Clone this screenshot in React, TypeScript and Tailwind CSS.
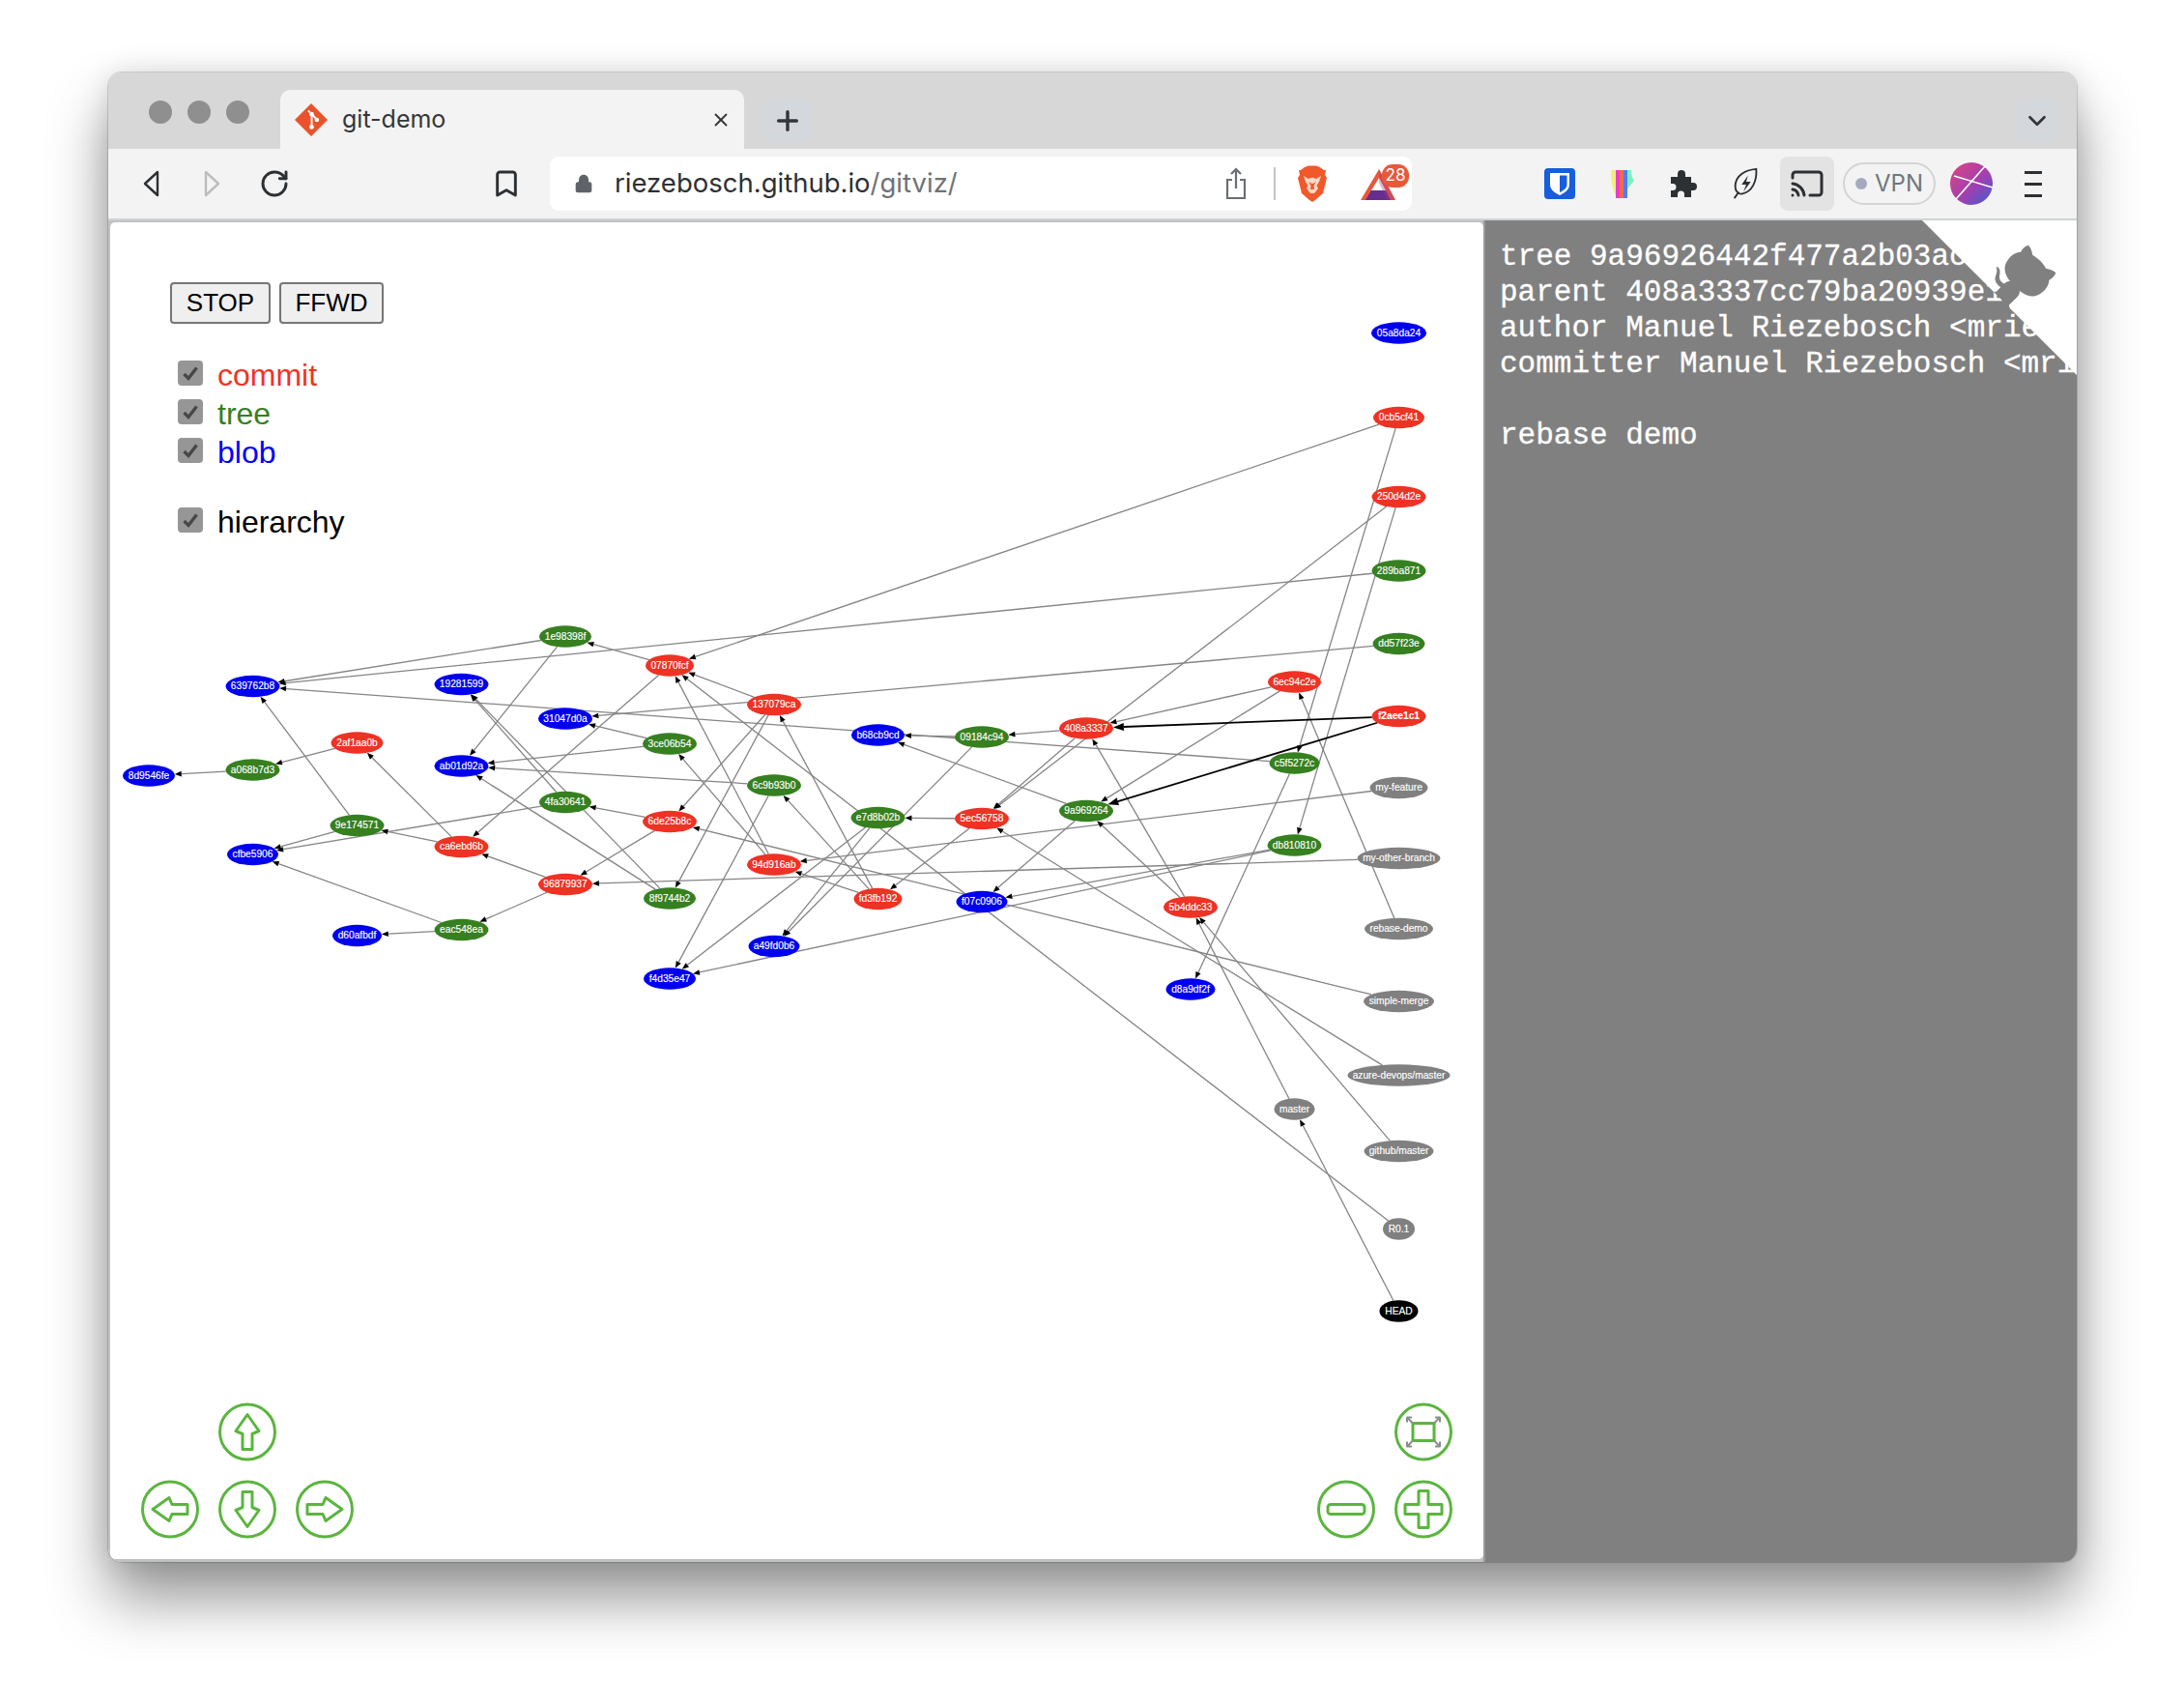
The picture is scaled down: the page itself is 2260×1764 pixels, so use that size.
import { Bookmark, Cast, Lock, RotateCw, X, Plus, ChevronDown } from "lucide-react";

type Kind = "commit" | "tree" | "blob" | "ref" | "head";
type GraphNode = { id: string; x: number; y: number; kind: Kind; rx: number };

const FILL: Record<Kind, string> = {
  commit: "#ee3224",
  tree: "#368020",
  blob: "#0000f0",
  ref: "#808080",
  head: "#000000",
};

// page coordinates, the svg viewBox below maps them onto the canvas
const nodes: GraphNode[] = [
  { id: "639762b8", x: 261.5, y: 710, kind: "blob", rx: 28 },
  { id: "19281599", x: 477.5, y: 708, kind: "blob", rx: 28 },
  { id: "1e98398f", x: 585, y: 658.5, kind: "tree", rx: 27 },
  { id: "07870fcf", x: 693, y: 688.5, kind: "commit", rx: 25 },
  { id: "31047d0a", x: 585, y: 743.5, kind: "blob", rx: 28 },
  { id: "2af1aa0b", x: 369.5, y: 768.5, kind: "commit", rx: 27 },
  { id: "3ce06b54", x: 693, y: 769.5, kind: "tree", rx: 28 },
  { id: "ab01d92a", x: 477.5, y: 792.5, kind: "blob", rx: 28 },
  { id: "a068b7d3", x: 261.5, y: 796.5, kind: "tree", rx: 28 },
  { id: "8d9546fe", x: 154, y: 802.5, kind: "blob", rx: 27 },
  { id: "4fa30641", x: 585, y: 830, kind: "tree", rx: 27 },
  { id: "9e174571", x: 369.5, y: 854, kind: "tree", rx: 28 },
  { id: "6de25b8c", x: 693, y: 850, kind: "commit", rx: 28 },
  { id: "cfbe5906", x: 261.5, y: 884, kind: "blob", rx: 26.5 },
  { id: "ca6ebd6b", x: 477.5, y: 876, kind: "commit", rx: 28 },
  { id: "96879937", x: 585, y: 915, kind: "commit", rx: 28 },
  { id: "8f9744b2", x: 693, y: 929.5, kind: "tree", rx: 27 },
  { id: "eac548ea", x: 477.5, y: 962, kind: "tree", rx: 28 },
  { id: "d60afbdf", x: 369.5, y: 968, kind: "blob", rx: 25.5 },
  { id: "f4d35e47", x: 693, y: 1012.5, kind: "blob", rx: 27 },
  { id: "137079ca", x: 801, y: 729, kind: "commit", rx: 28 },
  { id: "6c9b93b0", x: 801, y: 812.5, kind: "tree", rx: 28 },
  { id: "94d916ab", x: 801, y: 894.5, kind: "commit", rx: 28 },
  { id: "a49fd0b6", x: 801, y: 979, kind: "blob", rx: 26.5 },
  { id: "b68cb9cd", x: 908.5, y: 760.5, kind: "blob", rx: 27.5 },
  { id: "e7d8b02b", x: 908.5, y: 846, kind: "tree", rx: 28 },
  { id: "fd3fb192", x: 908.5, y: 930, kind: "commit", rx: 25 },
  { id: "09184c94", x: 1016, y: 762.5, kind: "tree", rx: 28 },
  { id: "5ec56758", x: 1016, y: 847, kind: "commit", rx: 28 },
  { id: "f07c0906", x: 1016, y: 933, kind: "blob", rx: 26.5 },
  { id: "408a3337", x: 1124, y: 753.5, kind: "commit", rx: 28 },
  { id: "9a969264", x: 1124, y: 839, kind: "tree", rx: 28 },
  { id: "5b4ddc33", x: 1232, y: 938.5, kind: "commit", rx: 28 },
  { id: "d8a9df2f", x: 1232, y: 1023.5, kind: "blob", rx: 25.5 },
  { id: "6ec94c2e", x: 1339.5, y: 705.5, kind: "commit", rx: 27.5 },
  { id: "c5f5272c", x: 1339.5, y: 789.5, kind: "tree", rx: 26 },
  { id: "db810810", x: 1339.5, y: 874.5, kind: "tree", rx: 28 },
  { id: "master", x: 1339.5, y: 1147.5, kind: "ref", rx: 21 },
  { id: "05a8da24", x: 1447.5, y: 344.5, kind: "blob", rx: 28.5 },
  { id: "0cb5cf41", x: 1447.5, y: 432, kind: "commit", rx: 26.5 },
  { id: "250d4d2e", x: 1447.5, y: 514, kind: "commit", rx: 28 },
  { id: "289ba871", x: 1447.5, y: 590.5, kind: "tree", rx: 28 },
  { id: "dd57f23e", x: 1447.5, y: 666, kind: "tree", rx: 27 },
  { id: "f2aee1c1", x: 1447.5, y: 741, kind: "commit", rx: 28 },
  { id: "my-feature", x: 1447.5, y: 815, kind: "ref", rx: 30 },
  { id: "my-other-branch", x: 1447.5, y: 888, kind: "ref", rx: 43 },
  { id: "rebase-demo", x: 1447.5, y: 961, kind: "ref", rx: 35.5 },
  { id: "simple-merge", x: 1447.5, y: 1036, kind: "ref", rx: 36.5 },
  { id: "azure-devops/master", x: 1447.5, y: 1112.5, kind: "ref", rx: 53 },
  { id: "github/master", x: 1447.5, y: 1191, kind: "ref", rx: 36 },
  { id: "R0.1", x: 1447.5, y: 1271.5, kind: "ref", rx: 16.5 },
  { id: "HEAD", x: 1447.5, y: 1356.5, kind: "head", rx: 20 },
];

const edges: [string, string][] = [
  ["0cb5cf41", "07870fcf"],
  ["0cb5cf41", "c5f5272c"],
  ["250d4d2e", "5ec56758"],
  ["250d4d2e", "db810810"],
  ["289ba871", "639762b8"],
  ["dd57f23e", "31047d0a"],
  ["6ec94c2e", "408a3337"],
  ["6ec94c2e", "9a969264"],
  ["c5f5272c", "639762b8"],
  ["c5f5272c", "d8a9df2f"],
  ["09184c94", "b68cb9cd"],
  ["09184c94", "a49fd0b6"],
  ["408a3337", "09184c94"],
  ["408a3337", "5ec56758"],
  ["5ec56758", "e7d8b02b"],
  ["5ec56758", "fd3fb192"],
  ["R0.1", "07870fcf"],
  ["e7d8b02b", "f4d35e47"],
  ["e7d8b02b", "a49fd0b6"],
  ["6c9b93b0", "ab01d92a"],
  ["6c9b93b0", "f4d35e47"],
  ["fd3fb192", "6c9b93b0"],
  ["fd3fb192", "137079ca"],
  ["fd3fb192", "94d916ab"],
  ["94d916ab", "3ce06b54"],
  ["94d916ab", "07870fcf"],
  ["137079ca", "07870fcf"],
  ["137079ca", "6de25b8c"],
  ["137079ca", "8f9744b2"],
  ["07870fcf", "1e98398f"],
  ["07870fcf", "ca6ebd6b"],
  ["1e98398f", "639762b8"],
  ["1e98398f", "ab01d92a"],
  ["3ce06b54", "31047d0a"],
  ["3ce06b54", "ab01d92a"],
  ["6de25b8c", "4fa30641"],
  ["6de25b8c", "96879937"],
  ["4fa30641", "19281599"],
  ["4fa30641", "cfbe5906"],
  ["8f9744b2", "19281599"],
  ["8f9744b2", "ab01d92a"],
  ["96879937", "ca6ebd6b"],
  ["96879937", "eac548ea"],
  ["ca6ebd6b", "9e174571"],
  ["ca6ebd6b", "2af1aa0b"],
  ["2af1aa0b", "a068b7d3"],
  ["a068b7d3", "8d9546fe"],
  ["9e174571", "639762b8"],
  ["9e174571", "cfbe5906"],
  ["eac548ea", "cfbe5906"],
  ["eac548ea", "d60afbdf"],
  ["my-feature", "94d916ab"],
  ["my-other-branch", "96879937"],
  ["rebase-demo", "6ec94c2e"],
  ["simple-merge", "6de25b8c"],
  ["azure-devops/master", "5ec56758"],
  ["github/master", "5b4ddc33"],
  ["master", "5b4ddc33"],
  ["HEAD", "master"],
  ["5b4ddc33", "408a3337"],
  ["5b4ddc33", "9a969264"],
  ["9a969264", "b68cb9cd"],
  ["9a969264", "f07c0906"],
  ["db810810", "f07c0906"],
  ["db810810", "f4d35e47"],
];

const boldEdges: [string, string][] = [
  ["f2aee1c1", "408a3337"],
  ["f2aee1c1", "9a969264"],
];

const RY = 11.2;

function Edge({ from, to, bold }: { from: string; to: string; bold?: boolean }) {
  const a = nodes.find((n) => n.id === from)!;
  const b = nodes.find((n) => n.id === to)!;
  const dx = b.x - a.x;
  const dy = b.y - a.y;
  const len = Math.hypot(dx, dy);
  const ux = dx / len;
  const uy = dy / len;
  // clip both ends on the ellipses
  const ta = 1 / Math.hypot(ux / a.rx, uy / RY);
  const tb = 1 / Math.hypot(ux / b.rx, uy / RY);
  const sx = a.x + ux * ta;
  const sy = a.y + uy * ta;
  const ex = b.x - ux * tb;
  const ey = b.y - uy * tb;
  const headLen = bold ? 11 : 7;
  const headW = bold ? 4 : 2.8;
  const bx = ex - ux * headLen;
  const by = ey - uy * headLen;
  const points = `${ex},${ey} ${bx - uy * headW},${by + ux * headW} ${bx + uy * headW},${by - ux * headW}`;
  return (
    <g>
      <line
        x1={sx}
        y1={sy}
        x2={bx}
        y2={by}
        stroke={bold ? "#000000" : "#858585"}
        strokeWidth={bold ? 1.8 : 1.3}
      />
      <polygon points={points} fill="#000000" />
    </g>
  );
}

function NavCircle({ cx, cy, children }: { cx: number; cy: number; children: React.ReactNode }) {
  return (
    <g transform={`translate(${cx} ${cy})`} fill="none" stroke="#5bb53f" strokeWidth={3} strokeLinejoin="round">
      <circle r={28.5} />
      {children}
    </g>
  );
}

const ARROW = "0,-18 12,-1 5,2 5,18 -5,18 -5,2 -12,-1";

function Graph() {
  return (
    <svg
      viewBox="114 230 1421 1384"
      className="absolute top-0 left-0 h-[1384px] w-[1421px] font-['Liberation_Sans',Arial,sans-serif]"
    >
      {edges.map(([from, to]) => (
        <Edge key={from + to} from={from} to={to} />
      ))}
      {boldEdges.map(([from, to]) => (
        <Edge key={from + to} from={from} to={to} bold />
      ))}
      {nodes.map((n) => (
        <g key={n.id}>
          <ellipse cx={n.x} cy={n.y} rx={n.rx} ry={RY} fill={FILL[n.kind]} />
          <text
            x={n.x}
            y={n.y + 3.4}
            textAnchor="middle"
            fill="#ffffff"
            stroke="#ffffff"
            strokeWidth={0.15}
            fontSize={10.2}
            fontWeight={n.id === "f2aee1c1" ? 700 : 400}
          >
            {n.id}
          </text>
        </g>
      ))}

      {/* pan and zoom controls */}
      <NavCircle cx={256} cy={1481.5}>
        <polygon points={ARROW} />
      </NavCircle>
      <NavCircle cx={176} cy={1561.5}>
        <polygon points={ARROW} transform="rotate(-90)" />
      </NavCircle>
      <NavCircle cx={256} cy={1561.5}>
        <polygon points={ARROW} transform="rotate(180)" />
      </NavCircle>
      <NavCircle cx={336} cy={1561.5}>
        <polygon points={ARROW} transform="rotate(90)" />
      </NavCircle>
      <NavCircle cx={1473} cy={1481.5}>
        <rect x={-11} y={-9} width={22} height={18} />
        <g stroke="#8c8c8c" strokeWidth={2}>
          <path d="M-11 -9 L-17 -15 M-17 -10 V-15 H-12" />
          <path d="M11 -9 L17 -15 M17 -10 V-15 H12" />
          <path d="M-11 9 L-17 15 M-17 10 V15 H-12" />
          <path d="M11 9 L17 15 M17 10 V15 H12" />
        </g>
      </NavCircle>
      <NavCircle cx={1393} cy={1561.5}>
        <rect x={-19} y={-5} width={38} height={10} rx={3} />
      </NavCircle>
      <NavCircle cx={1473} cy={1561.5}>
        <path d="M-5 -19 H5 V-5 H19 V5 H5 V19 H-5 V5 H-19 V-5 H-5 Z" />
      </NavCircle>
    </svg>
  );
}

function GitFavicon() {
  return (
    <svg viewBox="0 0 32 32" className="h-[34px] w-[34px]">
      <path d="M16 0 L32 16 L16 32 L0 16 Z" fill="#e8532b" />
      <path d="M13 7 L22 16 M16.5 10.5 V23 M16.5 10.5" stroke="#ffffff" strokeWidth={1.8} fill="none" />
      <circle cx={16.5} cy={23} r={2.2} fill="#ffffff" />
      <circle cx={21.5} cy={16} r={2.2} fill="#ffffff" />
      <circle cx={16.5} cy={10.5} r={2.2} fill="#ffffff" />
    </svg>
  );
}

function BraveLion() {
  return (
    <svg viewBox="0 0 32 38" className="h-[38px] w-[32px]">
      <path
        d="M8 2 L12 0.5 H20 L24 2 L28 5 L30 5 L29 10 L31 13 L27 29 L19 36 L16 38 L13 36 L5 29 L1 13 L3 10 L2 5 L4 5 Z"
        fill="#f1592a"
      />
      <path
        d="M7 11 L12 14 L16 12.5 L20 14 L25 11 L23 17 L20.5 21 L22 24 L18 29 H14 L10 24 L11.5 21 L9 17 Z"
        fill="#fbd9c8"
      />
      <path d="M12 17 L14.5 21 L14 25 H18 L17.5 21 L20 17 L16.5 19 H15.5 Z" fill="#f1592a" />
    </svg>
  );
}

function BatTriangle() {
  return (
    <svg viewBox="0 0 36 33" className="h-[33px] w-[36px]">
      <path d="M19 1 L36 33 H0 Z" fill="#e8573a" />
      <path d="M5 33 L11 23 H26 L31 33 Z" fill="#662d91" />
      <path d="M19 10 L26 23 H11 Z" fill="#ffffff" />
      <path d="M19 1 L36 33 H27 L19 15 Z" fill="#a03a8a" opacity={0.35} />
    </svg>
  );
}

function Bitwarden() {
  return (
    <svg viewBox="0 0 32 32" className="h-[32px] w-[32px]">
      <rect width={32} height={32} rx={4} fill="#175ddc" />
      <path d="M6 5 H26 V17 C26 23 20 26 16 28 C12 26 6 23 6 17 Z" fill="#ffffff" />
      <path d="M16 7.5 H23.5 V17 C23.5 21 19 23.5 16 25 Z" fill="#175ddc" />
    </svg>
  );
}

function RainbowExtension() {
  return (
    <svg viewBox="0 0 28 30" className="h-[30px] w-[28px]">
      <path d="M3 1 H8 V16 L11 20 V30 H9 C5 22 3 14 3 1 Z" fill="#f2ee7a" />
      <rect x={8} y={1} width={4} height={29} fill="#e53fc0" />
      <rect x={12} y={1} width={4} height={29} fill="#f26a4a" />
      <rect x={16} y={1} width={4} height={29} fill="#4f7df0" />
      <path d="M20 1 H24 C24 8 26 10 27 12 L20 20 Z" fill="#7ef0c0" />
    </svg>
  );
}

function PuzzlePiece() {
  return (
    <svg viewBox="0 0 32 32" className="h-[32px] w-[32px]" fill="#2d3033">
      <path d="M3 9 H10 V6 a4 4 0 1 1 8 0 V9 H24 V15 H26 a4 4 0 1 1 0 8 H24 V30 H17 V27 a3.5 3.5 0 1 0 -7 0 V30 H3 V23 H5 a3.5 3.5 0 1 0 0 -7 H3 Z" />
    </svg>
  );
}

function LeafBolt() {
  return (
    <svg viewBox="0 0 32 36" className="h-[34px] w-[32px]" fill="none" stroke="#2d3033" strokeWidth={2}>
      <path d="M28 2 C16 3 5 9 5 21 C5 27 9 30 13 29 C23 27 29 16 28 2 Z M9 27 L4 34" />
      <path d="M19 9 L12 19 H17 L14 27 L22 16 H17 Z" fill="#2d3033" stroke="none" />
    </svg>
  );
}

function Avatar() {
  return (
    <svg viewBox="0 0 44 44" className="h-[44px] w-[44px]">
      <defs>
        <linearGradient id="avatarFill" x1="0" y1="0" x2="1" y2="1">
          <stop offset="0" stopColor="#e0457f" />
          <stop offset="0.55" stopColor="#a23fb0" />
          <stop offset="1" stopColor="#3c5fd0" />
        </linearGradient>
      </defs>
      <circle cx={22} cy={22} r={22} fill="url(#avatarFill)" />
      <path d="M36 4 L6 38 M4 14 L44 26" stroke="#ffffff" strokeWidth={1.6} fill="none" />
    </svg>
  );
}

function GithubCorner() {
  return (
    <svg viewBox="0 0 250 250" className="absolute top-0 right-0 h-[160px] w-[160px] fill-white">
      <path d="M0,0 L115,115 L130,115 L142,142 L250,250 L250,0 Z" />
      <path
        className="fill-[#808080]"
        d="M128.3,109.0 C113.8,99.7 119.0,89.6 119.0,89.6 C122.0,82.7 120.5,78.6 120.5,78.6 C119.2,72.0 123.4,76.3 123.4,76.3 C127.3,80.9 125.5,87.3 125.5,87.3 C122.9,97.6 130.6,101.9 134.4,103.2"
      />
      <path
        className="fill-[#808080]"
        d="M115.0,115.0 C114.9,115.1 118.7,116.5 119.8,115.4 L133.7,101.6 C136.9,99.2 139.9,98.4 142.2,98.6 C133.8,88.0 127.5,74.4 143.8,58.0 C148.5,53.4 154.0,51.2 159.7,51.0 C160.3,49.4 163.2,43.6 171.4,40.1 C171.4,40.1 176.1,42.5 178.8,56.2 C183.1,58.6 187.2,61.8 190.9,65.4 C194.5,69.0 197.7,73.2 200.1,77.6 C213.8,80.2 216.3,84.9 216.3,84.9 C212.7,93.1 206.9,96.0 205.4,96.6 C205.1,102.4 203.0,107.8 198.3,112.5 C181.9,128.9 168.3,122.5 157.7,114.1 C157.9,116.9 156.7,120.9 152.7,124.9 L141.0,136.5 C139.8,137.7 141.6,141.9 141.8,141.8 Z"
      />
    </svg>
  );
}

function LegendRow({ label, className, spaced }: { label: string; className: string; spaced?: boolean }) {
  return (
    <div className={`flex h-[40px] items-center gap-[15px] ${spaced ? "mt-[32px]" : ""}`}>
      <div className="flex h-[26px] w-[26px] items-center justify-center rounded-[4px] bg-[#969696]">
        <svg viewBox="0 0 20 20" className="h-[20px] w-[20px]" fill="none" stroke="#474747" strokeWidth={3.4}>
          <path d="M3.5 11 L8 15.5 L16.5 4.5" />
        </svg>
      </div>
      <span className={`pt-[3px] text-[32px] leading-none ${className}`}>{label}</span>
    </div>
  );
}

function TabStrip() {
  return (
    <div className="flex h-[79px] shrink-0 bg-[#d7d7d7] font-['Inter',sans-serif] text-[#33363a]">
      <div className="mt-[29px] ml-[42px] flex gap-[16px]">
        <div className="h-[24px] w-[24px] rounded-full bg-[#8f8f8f]" />
        <div className="h-[24px] w-[24px] rounded-full bg-[#8f8f8f]" />
        <div className="h-[24px] w-[24px] rounded-full bg-[#8f8f8f]" />
      </div>
      <div className="mt-[18px] ml-[32px] flex h-[61px] w-[480px] items-center rounded-t-[10px] bg-[#f3f3f3]">
        <div className="ml-[15px]">
          <GitFavicon />
        </div>
        <span className="ml-[15px] text-[25px]">git-demo</span>
        <X className="mr-[13px] ml-auto h-[22px] w-[22px]" strokeWidth={2} />
      </div>
      <div className="mt-[27px] ml-[19px] flex h-[45px] w-[51px] items-center justify-center rounded-[8px] bg-[#d4d8dc]">
        <Plus className="h-[32px] w-[32px]" strokeWidth={2.6} />
      </div>
      <div className="mt-[27px] mr-[19px] ml-auto flex h-[45px] w-[44px] items-center justify-center rounded-[8px] bg-[#d4d8dc]">
        <ChevronDown className="h-[30px] w-[30px]" strokeWidth={2.2} />
      </div>
    </div>
  );
}

function Toolbar() {
  return (
    <div className="flex h-[74px] shrink-0 items-center border-b-2 border-[#cfd3d5] bg-[#f3f3f3] font-['Inter',sans-serif] text-[#2d3033]">
      <svg viewBox="0 0 32 32" className="ml-[29px] h-[32px] w-[32px]" fill="none" stroke="#2d3033" strokeWidth={2.4} strokeLinejoin="round">
        <path d="M22 4 V28 L9 16 Z" />
      </svg>
      <svg viewBox="0 0 32 32" className="ml-[30px] h-[32px] w-[32px]" fill="none" stroke="#bdbdbd" strokeWidth={2.4} strokeLinejoin="round">
        <path d="M10 4 V28 L23 16 Z" />
      </svg>
      <div className="ml-[33px] flex h-[32px] w-[32px] items-center justify-center">
        <RotateCw className="h-[32px] w-[32px]" strokeWidth={2.2} />
      </div>
      <div className="ml-[208px] flex h-[32px] w-[32px] items-center justify-center">
        <Bookmark className="h-[32px] w-[32px]" strokeWidth={2.2} />
      </div>
      <div className="ml-[29px] flex h-[56px] w-[892px] items-center rounded-[9px] bg-white pr-[17px]">
        <Lock className="ml-[25px] h-[22px] w-[20px] fill-[#5f6368] text-[#5f6368]" strokeWidth={2} />
        <div className="ml-[22px] flex-1 text-[27.5px]">
          riezebosch.github.io<span className="text-[#6f7276]">/gitviz/</span>
        </div>
        <svg viewBox="0 0 24 36" className="h-[36px] w-[24px]" fill="none" stroke="#6b6e72" strokeWidth={2.2}>
          <path d="M8 14 H3 V33 H21 V14 H16 M12 23 V3 M7 8 L12 3 L17 8" />
        </svg>
        <div className="ml-[27px] h-[34px] w-[2px] bg-[#c4c4c4]" />
        <div className="ml-[22px]">
          <BraveLion />
        </div>
        <div className="relative ml-[34px] flex">
          <BatTriangle />
          <div className="absolute -top-[4px] -right-[14px] flex h-[24px] w-[28px] items-center justify-center rounded-[11px] bg-[#e8593a] text-[17px] text-white">
            28
          </div>
        </div>
      </div>
      <div className="ml-[137px]">
        <Bitwarden />
      </div>
      <div className="ml-[34px]">
        <RainbowExtension />
      </div>
      <div className="ml-[34px]">
        <PuzzlePiece />
      </div>
      <div className="ml-[32px]">
        <LeafBolt />
      </div>
      <div className="ml-[20px] flex h-[56px] w-[56px] items-center justify-center rounded-[8px] bg-[#e3e3e3]">
        <Cast className="h-[36px] w-[36px]" strokeWidth={2} />
      </div>
      <div className="ml-[9px] flex h-[44px] w-[96px] items-center gap-[8px] rounded-full border-2 border-[#d2d4d6] pl-[11px] text-[24px] text-[#6e7780]">
        <div className="h-[12px] w-[12px] rounded-full bg-[#a5a9c0]" />
        VPN
      </div>
      <div className="ml-[15px]">
        <Avatar />
      </div>
      <div className="ml-[33px] flex w-[18px] flex-col gap-[9px]">
        <div className="h-[3px] bg-[#2d3033]" />
        <div className="h-[3px] bg-[#2d3033]" />
        <div className="h-[3px] bg-[#2d3033]" />
      </div>
    </div>
  );
}

function CommitPanel() {
  return (
    <div className="relative flex-1 overflow-hidden border-l-2 border-[#9a9a9a] bg-[#808080]">
      <pre className="pt-[19px] pl-[15px] font-['Liberation_Mono',monospace] text-[31px] leading-[37px] text-white [-webkit-text-stroke:0.3px_white]">
        {`tree 9a96926442f477a2b03ac
parent 408a3337cc79ba20939e1
author Manuel Riezebosch <mrie
committer Manuel Riezebosch <mri

rebase demo`}
      </pre>
      <GithubCorner />
    </div>
  );
}

export default function App() {
  return (
    <div className="h-[1764px] w-[2260px] overflow-hidden bg-white pt-[75px] pl-[112px]">
      <div className="flex h-[1541px] w-[2037px] flex-col overflow-hidden rounded-[14px] shadow-[0_0_0_1px_rgba(0,0,0,0.14),0_38px_62px_rgba(0,0,0,0.42),0_0_30px_rgba(0,0,0,0.12)]">
        <TabStrip />
        <Toolbar />
        <div className="flex min-h-0 flex-1">
          <div className="w-[1423px] bg-[#bfc2c3] pt-[2px] pb-[3px] pl-[2px]">
            <div className="relative h-full rounded-[5px] bg-white font-['Liberation_Sans',Arial,sans-serif]">
              <Graph />
              <div className="relative pt-[62px] pl-[62px]">
                <div className="flex gap-[9px]">
                  <button className="h-[43px] w-[104px] rounded-[4px] border-2 border-[#767676] bg-[#efefef] text-[26px] text-black">
                    STOP
                  </button>
                  <button className="h-[43px] w-[108px] rounded-[4px] border-2 border-[#767676] bg-[#efefef] text-[26px] text-black">
                    FFWD
                  </button>
                </div>
                <div className="mt-[31px] ml-[8px]">
                  <LegendRow label="commit" className="text-[#f03324]" />
                  <LegendRow label="tree" className="text-[#368020]" />
                  <LegendRow label="blob" className="text-[#0000ff]" />
                  <LegendRow label="hierarchy" className="text-black" spaced />
                </div>
              </div>
            </div>
          </div>
          <CommitPanel />
        </div>
      </div>
    </div>
  );
}
